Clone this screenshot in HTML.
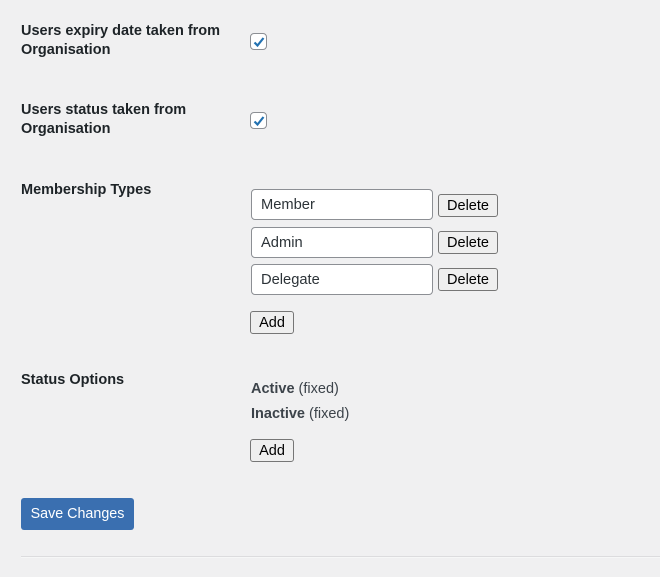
<!DOCTYPE html>
<html><head><meta charset="utf-8"><style>
*{box-sizing:border-box;margin:0;padding:0}
body{width:660px;height:577px;background:#f0f0f1;position:relative;overflow:hidden;font-family:"Liberation Sans",Arial,sans-serif;color:#1d2327}
.a{position:absolute}
.lbl{font-weight:bold;font-size:14.5px;line-height:19px;left:21px;color:#1d2327}
.cb{width:17px;height:17px;border:1px solid #8c8f94;border-radius:4px;background:#fff;left:250px}
.cb svg{position:absolute;left:1px;top:1px}
.inp{left:251px;width:182px;height:31px;border:1px solid #8c8f94;border-radius:4px;background:#fff;font-size:14.7px;padding-left:9px;line-height:31px;color:#2c3338}
.btn{border:1px solid #767676;border-radius:3px;background:#efefef;font-size:14.5px;color:#000;text-align:center;height:23px;line-height:22px}
.txt{left:251px;font-size:14.5px;color:#3c434a}
</style></head><body>
<div class="a lbl" style="top:22px">Users expiry date taken from<br>Organisation</div>
<div class="a cb" style="top:33px"><svg width="14" height="14" viewBox="0 0 14 14"><path d="M2.5 7.5 L5.5 10.5 L11.5 3" stroke="#2271b1" stroke-width="2.2" fill="none"/></svg></div>
<div class="a lbl" style="top:101px">Users status taken from<br>Organisation</div>
<div class="a cb" style="top:112px"><svg width="14" height="14" viewBox="0 0 14 14"><path d="M2.5 7.5 L5.5 10.5 L11.5 3" stroke="#2271b1" stroke-width="2.2" fill="none"/></svg></div>
<div class="a lbl" style="top:181px">Membership Types</div>
<div class="a inp" style="top:189px">Member</div>
<div class="a btn" style="left:438px;top:194px;width:60px">Delete</div>
<div class="a inp" style="top:227px">Admin</div>
<div class="a btn" style="left:438px;top:231px;width:60px">Delete</div>
<div class="a inp" style="top:264px">Delegate</div>
<div class="a btn" style="left:438px;top:268px;width:60px">Delete</div>
<div class="a btn" style="left:250px;top:311px;width:44px">Add</div>
<div class="a lbl" style="top:371px">Status Options</div>
<div class="a txt" style="top:381px"><b>Active</b> (fixed)</div>
<div class="a txt" style="top:406px"><b>Inactive</b> (fixed)</div>
<div class="a btn" style="left:250px;top:439px;width:44px">Add</div>
<div class="a" style="left:21px;top:498px;width:113px;height:32px;background:#3a6fb0;border-radius:3px;color:#fff;font-size:14.3px;line-height:33px;text-align:center">Save Changes</div>
<div class="a" style="left:21px;top:556px;width:639px;height:1px;background:#dcdcde"></div>
<div class="a" style="left:21px;top:557px;width:639px;height:1px;background:#f6f7f7"></div>
</body></html>
